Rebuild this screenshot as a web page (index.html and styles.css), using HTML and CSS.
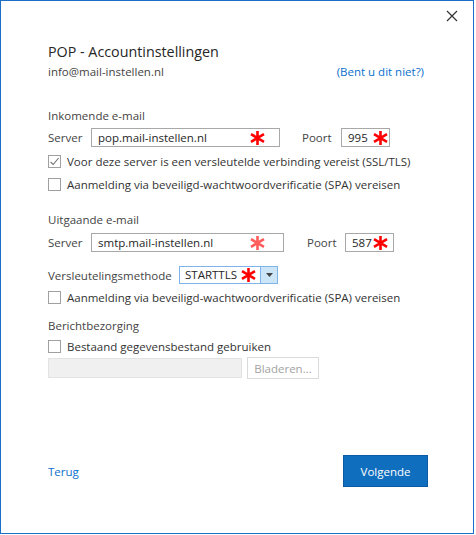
FILE: index.html
```html
<!DOCTYPE html>
<html lang="nl">
<head>
<meta charset="utf-8">
<title>POP - Accountinstellingen</title>
<link rel="stylesheet" href="styles.css">
</head>
<body>
<div class="dialog">
  <div class="titlebar">
    <svg class="close" width="12" height="12" viewBox="0 0 12 12"><path d="M1 1 L11 11 M11 1 L1 11" stroke="#333" stroke-width="1.2" fill="none"/></svg>
  </div>
  <h1 class="title">POP - Accountinstellingen</h1>
  <div class="account">
    <span>info@mail-instellen.nl</span>
    <a class="link" href="#">(Bent u dit niet?)</a>
  </div>

  <div class="section first">Inkomende e-mail</div>
  <div class="row server-row">
    <span class="label server-label">Server</span>
    <div class="field server-in1">pop.mail-instellen.nl
      <svg class="ast ast-s1" viewBox="0 0 15 14"><path d="M7.5 0 V14 M1 3.2 L14 10.8 M1 10.8 L14 3.2"/></svg>
    </div>
    <span class="label poort1">Poort</span>
    <div class="field port">995
      <svg class="ast ast-p1" viewBox="0 0 15 14"><path d="M7.5 0 V14 M1 3.2 L14 10.8 M1 10.8 L14 3.2"/></svg>
    </div>
  </div>
  <label class="check c1"><span class="box"><svg width="11" height="11" viewBox="0 0 11 11"><path d="M1.5 5.8 L4.2 8.5 L9.6 2" stroke="#707070" stroke-width="1.1" fill="none"/></svg></span>Voor deze server is een versleutelde verbinding vereist (SSL/TLS)</label>
  <label class="check c2"><span class="box"></span>Aanmelding via beveiligd-wachtwoordverificatie (SPA) vereisen</label>

  <div class="section second">Uitgaande e-mail</div>
  <div class="row server-row2">
    <span class="label server-label">Server</span>
    <div class="field server-in2">smtp.mail-instellen.nl
      <svg class="ast ast-s2 light" viewBox="0 0 15 14"><path d="M7.5 0 V14 M1 3.2 L14 10.8 M1 10.8 L14 3.2"/></svg>
    </div>
    <span class="label poort2">Poort</span>
    <div class="field port">587
      <svg class="ast ast-p2" viewBox="0 0 15 14"><path d="M7.5 0 V14 M1 3.2 L14 10.8 M1 10.8 L14 3.2"/></svg>
    </div>
  </div>
  <div class="row enc-row">
    <span class="label enc-label">Versleutelingsmethode</span>
    <div class="select">
      <span class="select-val">STARTTLS</span>
      <span class="select-arrow"><svg width="7" height="4" viewBox="0 0 7 4"><path d="M0 0 H7 L3.5 4 Z" fill="#444"/></svg></span>
      <svg class="ast ast-enc" viewBox="0 0 15 14"><path d="M7.5 0 V14 M1 3.2 L14 10.8 M1 10.8 L14 3.2"/></svg>
    </div>
  </div>
  <label class="check c3"><span class="box"></span>Aanmelding via beveiligd-wachtwoordverificatie (SPA) vereisen</label>

  <div class="section third">Berichtbezorging</div>
  <label class="check c4"><span class="box"></span>Bestaand gegevensbestand gebruiken</label>
  <div class="row browse-row">
    <div class="disabled-field"></div>
    <button class="browse" disabled>Bladeren...</button>
  </div>

  <div class="footer">
    <a class="link back" href="#">Terug</a>
    <button class="primary">Volgende</button>
  </div>
</div>
</body>
</html>
```

FILE: styles.css
```css
html, body {
  margin: 0;
  padding: 0;
  background: #ffffff;
}
body {
  font-family: "Segoe UI", "Open Sans", "Noto Sans", sans-serif;
  font-size: 11.5px;
  color: #333333;
}
.dialog {
  box-sizing: border-box;
  width: 474px;
  height: 534px;
  border: 1px solid #1c6fc7;
  background: #ffffff;
  padding: 0 49px 46px 47px;
  display: flex;
  flex-direction: column;
}
.titlebar {
  height: 30px;
  display: flex;
  justify-content: flex-end;
  align-items: flex-start;
  margin-right: -34px;
}
.close {
  margin-top: 9px;
}
.title {
  margin: 11px 0 0 0;
  font-size: 14.3px;
  line-height: 20px;
  font-weight: normal;
  color: #262626;
}
.account {
  margin-top: 2px;
  height: 16px;
  line-height: 16px;
  display: flex;
  justify-content: space-between;
  color: #444;
}
.link {
  color: #0b6fcc;
  text-decoration: none;
}
.section {
  height: 16px;
  line-height: 16px;
  color: #444;
}
.section.first { margin-top: 28px; }
.section.second { margin-top: 19px; }
.section.third { margin-top: 12px; }
.row {
  display: flex;
  align-items: center;
  white-space: nowrap;
}
.label {
  color: #444;
}
.server-label { width: 43px; }
.field {
  position: relative;
  box-sizing: border-box;
  height: 19px;
  border: 1px solid #a8a8a8;
  padding-left: 6px;
  line-height: 17px;
  color: #262626;
}
.server-row { margin-top: 4px; }
.server-row2 { margin-top: 5px; }
.server-in1 { width: 189px; }
.server-in2 { width: 193px; }
.poort1 { margin-left: 22px; width: 39px; }
.poort2 { margin-left: 23px; width: 38px; }
.port { width: 49px; }
.ast {
  position: absolute;
  width: 15px;
  height: 14px;
  fill: none;
  stroke: #ff0000;
  stroke-width: 2.6;
}
.ast.light { stroke: #ff5c5c; }
.ast-s1 { left: 158px; top: 2px; }
.ast-p1 { left: 31px; top: 2px; }
.ast-s2 { left: 158px; top: 2px; }
.ast-p2 { left: 27px; top: 2px; }
.ast-enc { left: 61px; top: 1px; }
.enc-row { margin-top: 14px; }
.enc-label { width: 131px; }
.select {
  position: relative;
  box-sizing: border-box;
  width: 99px;
  height: 18px;
  border: 1px solid #7eb4ea;
  display: flex;
}
.select-val {
  flex: 1;
  padding-left: 5px;
  line-height: 16px;
  color: #262626;
}
.select-arrow {
  width: 16px;
  border-left: 1px solid #7eb4ea;
  background: #cde6f7;
  display: flex;
  align-items: center;
  justify-content: center;
}
.check {
  display: flex;
  align-items: center;
  height: 18px;
  color: #333;
  white-space: nowrap;
}
.box {
  box-sizing: border-box;
  flex: none;
  width: 13px;
  height: 13px;
  border: 1px solid #a0a0a0;
  margin-right: 6px;
  display: flex;
  align-items: center;
  justify-content: center;
}
.c1 { margin-top: 5px; }
.c2 { margin-top: 5px; }
.c3 { margin-top: 4px; }
.c4 { margin-top: 3px; }
.browse-row {
  margin-top: 2px;
  align-items: flex-start;
}
.disabled-field {
  box-sizing: border-box;
  width: 194px;
  height: 20px;
  margin-top: 1px;
  background: #f0f0f0;
  border: 1px solid #e3e3e3;
}
.browse {
  box-sizing: border-box;
  margin-left: 5px;
  width: 72px;
  height: 22px;
  border: 1px solid #dadada;
  background: #ffffff;
  color: #a3a3a3;
  font-family: inherit;
  font-size: 11.5px;
  padding: 0;
}
.footer {
  margin-top: auto;
  margin-right: -4px;
  display: flex;
  justify-content: space-between;
  align-items: center;
}
.back {
  font-size: 11.5px;
}
.primary {
  box-sizing: border-box;
  width: 85px;
  height: 32px;
  background: #106ebe;
  border: 1px solid #0b5aa6;
  color: #ffffff;
  font-family: inherit;
  font-size: 11.5px;
  padding: 0;
}
```
